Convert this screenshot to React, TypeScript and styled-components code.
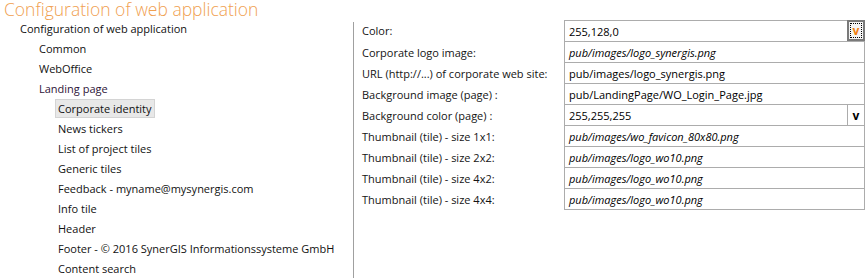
import styled, { createGlobalStyle } from "styled-components";

const GlobalStyle = createGlobalStyle`
  html, body {
    margin: 0;
    padding: 0;
    background: #ffffff;
  }
  body {
    font-family: "Open Sans", "Noto Sans", sans-serif;
    font-size: 11px;
    color: #1a1a1a;
    overflow: hidden;
  }
`;

type treeNode = {
  id: number;
  title: string;
  level: number;
  selected?: boolean;
  visited?: boolean;
};

type fieldRow = {
  id: number;
  label: string;
  value: string;
  inherited?: boolean;
  picker?: "active" | "plain";
};

const treeList: Array<treeNode> = [
  { id: 1, title: "Configuration of web application", level: 0 },
  { id: 2, title: "Common", level: 1 },
  { id: 3, title: "WebOffice", level: 1 },
  { id: 4, title: "Landing page", level: 1, visited: true },
  { id: 5, title: "Corporate identity", level: 2, selected: true },
  { id: 6, title: "News tickers", level: 2 },
  { id: 7, title: "List of project tiles", level: 2 },
  { id: 8, title: "Generic tiles", level: 2 },
  { id: 9, title: "Feedback - myname@mysynergis.com", level: 2 },
  { id: 10, title: "Info tile", level: 2 },
  { id: 11, title: "Header", level: 2 },
  { id: 12, title: "Footer - © 2016 SynerGIS Informationssysteme GmbH", level: 2 },
  { id: 13, title: "Content search", level: 2 },
];

const fieldList: Array<fieldRow> = [
  { id: 1, label: "Color:", value: "255,128,0", picker: "active" },
  { id: 2, label: "Corporate logo image:", value: "pub/images/logo_synergis.png", inherited: true },
  { id: 3, label: "URL (http://...) of corporate web site:", value: "pub/images/logo_synergis.png" },
  { id: 4, label: "Background image (page) :", value: "pub/LandingPage/WO_Login_Page.jpg" },
  { id: 5, label: "Background color (page) :", value: "255,255,255", picker: "plain" },
  { id: 6, label: "Thumbnail (tile) - size 1x1:", value: "pub/images/wo_favicon_80x80.png", inherited: true },
  { id: 7, label: "Thumbnail (tile) - size 2x2:", value: "pub/images/logo_wo10.png", inherited: true },
  { id: 8, label: "Thumbnail (tile) - size 4x2:", value: "pub/images/logo_wo10.png", inherited: true },
  { id: 9, label: "Thumbnail (tile) - size 4x4:", value: "pub/images/logo_wo10.png", inherited: true },
];

const Page = styled.div`
  width: 867px;
  height: 278px;
  display: flex;
  flex-direction: column;
`;

const Title = styled.h1`
  margin: 0;
  padding: 0 0 0 4px;
  height: 18px;
  line-height: 19px;
  font-size: 17.5px;
  font-weight: 300;
  color: #f0a050;
  white-space: nowrap;
`;

const Body = styled.div`
  flex: 1;
  display: flex;
  min-height: 0;
`;

const TreePanel = styled.ul`
  width: 353px;
  margin: 0;
  padding: 0;
  list-style: none;
`;

const TreeItem = styled.li<{ $level: number }>`
  height: 20px;
  display: flex;
  align-items: center;
  padding-left: ${(props) => 20 + props.$level * 19}px;
`;

const TreeLabel = styled.span<{ $selected?: boolean; $visited?: boolean }>`
  white-space: nowrap;
  line-height: 17px;
  padding: 0 2px;
  margin-left: -3px;
  border: 1px solid ${(props) => (props.$selected ? "#d4d4d4" : "transparent")};
  background: ${(props) => (props.$selected ? "#e8e8e8" : "transparent")};
  color: ${(props) => (props.$visited ? "#2e1438" : "#111111")};
`;

const Divider = styled.div`
  width: 1px;
  margin-top: 4px;
  background: #a0a0a0;
`;

const FormPanel = styled.div`
  flex: 1;
  padding: 2px 2px 0 8px;
`;

const FieldGrid = styled.div`
  display: grid;
  grid-template-columns: 202px 1fr;
`;

const FieldLabel = styled.div`
  height: 21px;
  display: flex;
  align-items: center;
  white-space: nowrap;
  color: #141414;
`;

const FieldBox = styled.div<{ $first?: boolean }>`
  height: 20px;
  display: flex;
  border: 1px solid #acacac;
  border-top-width: ${(props) => (props.$first ? "1px" : "0")};
`;

const FieldValue = styled.div<{ $inherited?: boolean }>`
  flex: 1;
  display: flex;
  align-items: center;
  padding-left: 4px;
  white-space: nowrap;
  color: #000000;
  font-style: ${(props) => (props.$inherited ? "italic" : "normal")};
`;

const Picker = styled.div<{ $active?: boolean }>`
  width: 17px;
  display: flex;
  align-items: center;
  justify-content: center;
  font-weight: 700;
  font-size: 12px;
  box-sizing: border-box;
  border-left: 1px solid #acacac;
  color: ${(props) => (props.$active ? "#f08010" : "#000000")};
  ${(props) =>
    props.$active &&
    `
    border: 2px solid #7a7a7a;
    background: #f4f4f4;
    margin: -1px -1px -1px 0;
    width: 18px;
    height: 21px;
  `}
`;

const FocusRing = styled.span`
  display: flex;
  align-items: center;
  justify-content: center;
  width: 10px;
  height: 13px;
  border: 1px dotted #000000;
  line-height: 1;
`;

const App = () => {
  return (
    <Page>
      <GlobalStyle />
      <Title>Configuration of web application</Title>
      <Body>
        <TreePanel>
          {treeList.map((item) => (
            <TreeItem key={item.id} $level={item.level}>
              <TreeLabel $selected={item.selected} $visited={item.visited}>
                {item.title}
              </TreeLabel>
            </TreeItem>
          ))}
        </TreePanel>
        <Divider />
        <FormPanel>
          <FieldGrid>
            {fieldList.map((row, i) => (
              <>
                <FieldLabel key={`l${row.id}`}>{row.label}</FieldLabel>
                <FieldBox key={`v${row.id}`} $first={i === 0}>
                  <FieldValue $inherited={row.inherited}>{row.value}</FieldValue>
                  {row.picker === "active" && (
                    <Picker $active>
                      <FocusRing>v</FocusRing>
                    </Picker>
                  )}
                  {row.picker === "plain" && <Picker>v</Picker>}
                </FieldBox>
              </>
            ))}
          </FieldGrid>
        </FormPanel>
      </Body>
    </Page>
  );
};

export default App;
